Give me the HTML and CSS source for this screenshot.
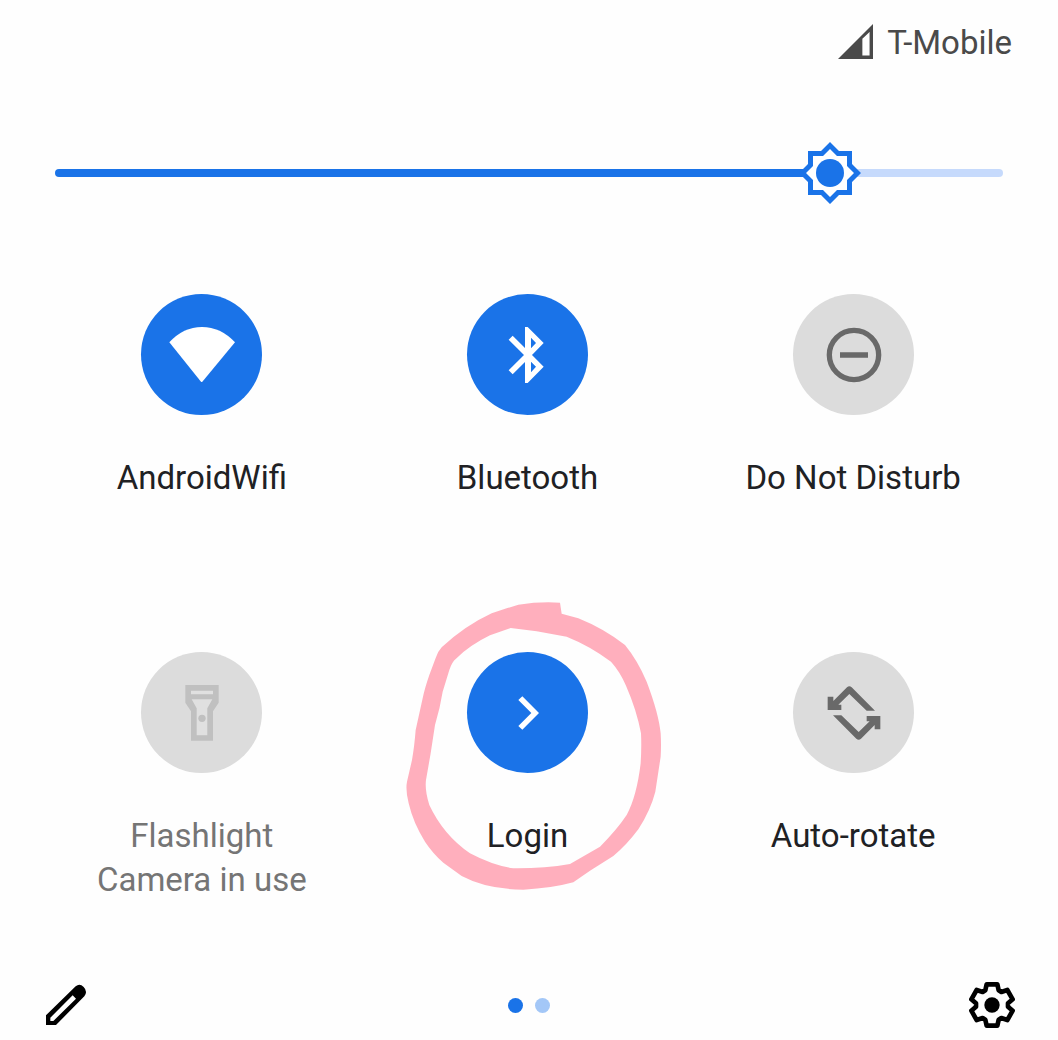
FILE: index.html
```html
<!DOCTYPE html>
<html lang="en">
<head>
<meta charset="utf-8">
<meta name="viewport" content="width=device-width, initial-scale=1">
<title>Quick settings</title>
<link rel="stylesheet" href="styles.css">
</head>
<body>
<main class="panel">
  <header class="status">
    <svg class="signal" viewBox="0 0 102 102" aria-hidden="true"><path fill-rule="evenodd" d="M0 102L102 0V102ZM71 43V92H92V23Z"/></svg>
    <span>T-Mobile</span>
  </header>

  <div class="brightness">
    <input class="slider" type="range" min="0" max="100" value="84" aria-label="Display brightness">
  </div>

  <section class="tiles" aria-label="Quick settings tiles">
    <button class="tile on" type="button" aria-pressed="true">
      <svg class="icon" viewBox="33 27 363 363" aria-hidden="true"><path d="M118 172Q160 126 216 126T315 172L217 290Q215 292 213 290Z"/></svg>
      <span class="label">AndroidWifi</span>
    </button>
    <button class="tile on" type="button" aria-pressed="true">
      <svg class="icon" viewBox="36 27 363 363" aria-hidden="true"><path fill-rule="evenodd" d="M210 126H218L266 174L231 210L266 245L218 294H210V231L173 268L161 256L207 210L161 164L173 152L210 189ZM228 158V190L243 174ZM228 230V262L243 245Z"/></svg>
      <span class="label">Bluetooth</span>
    </button>
    <button class="tile" type="button" aria-pressed="false">
      <svg class="icon" viewBox="39 27 363 363" aria-hidden="true"><circle class="line" cx="222" cy="210" r="74"/><path d="M180 202H264V218H180Z"/></svg>
      <span class="label">Do Not Disturb</span>
    </button>
    <button class="tile unavailable" type="button" disabled>
      <svg class="icon" viewBox="33 36 363 363" aria-hidden="true"><path class="lens" d="M183 152H249V163H183ZM183 178H249L231 205V286H200V205Z"/><path fill-rule="evenodd" d="M166 135H266V188L249 214V302H183V214L166 188ZM183 152V163H249V152ZM185 178L200 205V286H232V205L247 178Z"/><circle cx="216" cy="235" r="11"/></svg>
      <span class="label">Flashlight<br>Camera in use</span>
    </button>
    <button class="tile on" type="button" aria-pressed="true">
      <svg class="highlight" viewBox="0 0 870 930" aria-hidden="true"><path fill-rule="evenodd" d="M510 38Q450 34 385 44L350 55L305 70Q225 107 155 172Q143 185 137 204L118 255Q104 295 98 325L77 420Q73 470 66 510L51 575Q46 600 56 640Q70 700 105 755Q128 790 160 818L215 858Q290 898 400 899Q485 895 550 877L600 842L670 798Q710 765 745 718Q782 660 796 605L812 500Q814 465 812 430Q806 370 770 275Q742 210 705 165Q640 115 565 85L515 71ZM362 114L440 124L530 140Q600 168 663 215Q690 245 708 287Q740 360 753 430Q755 470 752 520Q740 620 710 675Q680 720 630 770L540 822Q460 836 370 835Q310 827 240 790Q160 735 118 645Q104 600 108 570L122 490L135 405Q150 355 158 305L178 240Q186 215 198 206Q240 165 300 136Z"/></svg>
      <svg class="icon" viewBox="231 186 363 363" aria-hidden="true"><path d="M397 319L447 369L397 419L385 408L424 369L385 330Z"/></svg>
      <span class="label">Login</span>
    </button>
    <button class="tile" type="button" aria-pressed="false">
      <svg class="icon" viewBox="39 36 363 363" aria-hidden="true"><path id="rotate-arrow" d="M143 170H160V183L201 142Q208 136 215 142L285 212H260L208 162L175 194H184V210H143Z"/><use href="#rotate-arrow" transform="rotate(180 222 219)"/></svg>
      <span class="label">Auto-rotate</span>
    </button>
  </section>

  <footer class="footer">
    <button class="tool" type="button" aria-label="Edit tiles">
      <svg viewBox="39 36 138 138" aria-hidden="true"><path fill-rule="evenodd" d="M48 165V136L137 49Q149 39 161 51Q174 64 163 79L78 165ZM61 143V153H70L138 86L128 76Z"/></svg>
    </button>
    <div class="pages" role="group" aria-label="Page 1 of 2">
      <span class="dot current"></span>
      <span class="dot"></span>
    </div>
    <button class="tool" type="button" aria-label="Settings">
      <svg viewBox="-69 -69 138 138" aria-hidden="true"><path class="cog" d="M-16 -62H16L20 -44L28 -39L46 -45L62 -17L48 -5V5L62 17L46 45L28 39L20 44L16 62H-16L-20 44L-28 39L-46 45L-62 17L-48 5V-5L-62 -17L-46 -45L-28 -39L-20 -44Z"/><circle r="23"/></svg>
    </button>
  </footer>
</main>
</body>
</html>
```
FILE: styles.css
```css
* {
  box-sizing: border-box;
}

body {
  margin: 0;
  background: #fefefe;
  color: #202124;
  font: 33px/44px Roboto, "Liberation Sans", sans-serif;
}

button {
  padding: 0;
  border: 0;
  background: none;
  color: inherit;
  font: inherit;
}

.status {
  display: flex;
  justify-content: flex-end;
  align-items: center;
  gap: 14px;
  padding: 21px 46px 0;
  color: #4a4a4a;
}

.signal {
  width: 35px;
  height: 35px;
  margin-bottom: 4px;
  fill: currentColor;
}

.brightness {
  padding: 77px 55px 0;
}

.slider {
  display: block;
  width: 100%;
  height: 62px;
  margin: 0;
  background: none;
  appearance: none;
}

.slider::-webkit-slider-runnable-track {
  height: 8px;
  border-radius: 4px;
  background: linear-gradient(to right, #1a73e8 82%, #c6dafc 82%);
}

.slider::-webkit-slider-thumb {
  width: 62px;
  height: 62px;
  margin-top: -27px;
  border: 0;
  appearance: none;
  background: url("data:image/svg+xml,%3Csvg xmlns='http://www.w3.org/2000/svg' viewBox='-31 -31 62 62'%3E%3Cpath fill='%231a73e8' d='M0-31L9-22H22V-9L31 0L22 9V22H9L0 31L-9 22H-22V9L-31 0L-22-9V-22H-9Z'/%3E%3Cpath fill='white' d='M0-24L7-17H17V-7L24 0L17 7V17H7L0 24L-7 17H-17V7L-24 0L-17-7V-17H-7Z'/%3E%3Ccircle r='14' fill='%231a73e8'/%3E%3C/svg%3E") center / contain no-repeat;
}

.tiles {
  display: grid;
  grid-template-columns: repeat(3, 1fr);
  row-gap: 108px;
  padding: 90px 42px 0 39px;
}

.tile {
  position: relative;
  display: flex;
  flex-direction: column;
  align-items: center;
  gap: 41px;
  min-height: 250px;
}

.icon {
  width: 121px;
  height: 121px;
  border-radius: 50%;
  background: #dcdcdc;
  fill: #696969;
}

.icon .line {
  fill: none;
  stroke: #696969;
  stroke-width: 16;
}

.on .icon {
  background: #1a73e8;
  fill: #ffffff;
}

.unavailable {
  color: #757575;
}

.unavailable .icon {
  fill: #c0c0c0;
}

.unavailable .lens {
  fill: #e0e0e0;
}

.icon,
.label {
  z-index: 1;
}

/* Hand-drawn ring over the tile */
.highlight {
  position: absolute;
  top: -62px;
  left: calc(50% - 137px);
  width: 290px;
  height: 310px;
  fill: #ffafbd;
  pointer-events: none;
}

.footer {
  display: flex;
  justify-content: space-between;
  align-items: center;
  padding: 80px 43px 8px;
}

.tool {
  width: 46px;
  height: 46px;
}

.tool svg {
  display: block;
  width: 100%;
  height: 100%;
}

.cog {
  fill: none;
  stroke: #000000;
  stroke-width: 14;
  stroke-linejoin: round;
}

.pages {
  display: flex;
  gap: 12px;
}

.dot {
  width: 15px;
  height: 15px;
  border-radius: 50%;
  background: #a3c7f7;
}

.current {
  background: #1a73e8;
}
```
